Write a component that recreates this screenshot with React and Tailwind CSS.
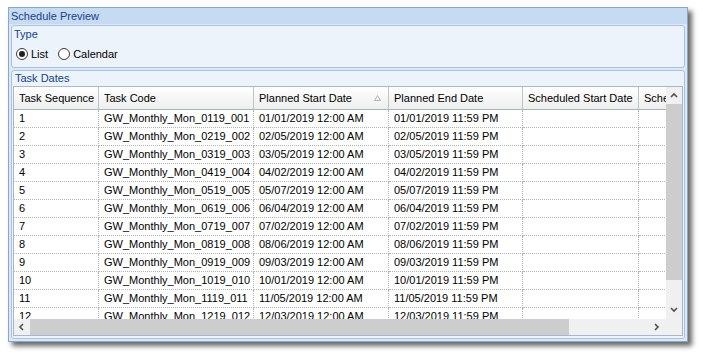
import React from 'react';

const cols = [
  { title: 'Task Sequence', w: 85 },
  { title: 'Task Code', w: 155 },
  { title: 'Planned Start Date', w: 135, sort: true },
  { title: 'Planned End Date', w: 134 },
  { title: 'Scheduled Start Date', w: 116 },
  { title: 'Scheduled End Date', w: 130 },
];

const starts = ['01/01', '02/05', '03/05', '04/02', '05/07', '06/04', '07/02', '08/06', '09/03', '10/01', '11/05', '12/03'];

const rows = starts.map((d, i) => {
  const n = i + 1;
  const mm = String(n).padStart(2, '0');
  return [
    String(n),
    `GW_Monthly_Mon_${mm}19_${String(n).padStart(3, '0')}`,
    `${d}/2019 12:00 AM`,
    `${d}/2019 11:59 PM`,
    '',
    '',
  ];
});

function Chevron({ dir }) {
  const pts = {
    up: '1,5 4,2 7,5',
    down: '1,2 4,5 7,2',
    left: '5,1 2,4 5,7',
    right: '2,1 5,4 2,7',
  }[dir];
  return (
    <svg width="8" height="8" viewBox="0 0 8 8">
      <polyline points={pts} fill="none" stroke="#505050" strokeWidth="1.6" />
    </svg>
  );
}

function Radio({ checked, label }) {
  return (
    <div className="flex items-center gap-[3px]">
      <div className="w-[12px] h-[12px] rounded-full border border-[#3c3c3c] bg-white flex items-center justify-center">
        {checked && <div className="w-[6px] h-[6px] rounded-full bg-[#1e1e1e]" />}
      </div>
      <span>{label}</span>
    </div>
  );
}

export default function App() {
  return (
    <div
      className="w-[703px] h-[357px] bg-white pl-[8px] pt-[7px] text-[11px] text-black"
      style={{ fontFamily: '"Liberation Sans", Arial, sans-serif' }}
    >
      <div className="w-[680px] h-[335px] border border-[#8aa6cb] bg-[#dce8f6] flex flex-col shadow-[4px_4px_5px_rgba(0,0,0,0.6)]">
        {/* Title */}
        <div className="h-[16px] bg-[#c6daf1] text-[#15428b] pl-[2px] flex items-center leading-none">
          Schedule Preview
        </div>

        <div className="flex flex-col px-[2px] pt-[1px] gap-[2px]">
          {/* Type group */}
          <div className="h-[43px] rounded-[3px] border border-[#a9c2e0] bg-[#edf3fb] flex flex-col">
            <div className="h-[15px] pl-[2px] pt-[1px] text-[#15428b] leading-[14px]">Type</div>
            <div className="flex items-center gap-[10px] pl-[4px] pt-[7px] leading-none">
              <Radio checked label="List" />
              <Radio label="Calendar" />
            </div>
          </div>

          {/* Task Dates group */}
          <div className="h-[269px] rounded-[3px] border border-[#a9c2e0] bg-[#edf3fb] flex flex-col px-[1px]">
            <div className="h-[15px] pl-[2px] text-[#15428b] leading-[14px]">Task Dates</div>
            <div className="h-[250px] border border-[#aab8c8] bg-white flex flex-col">
              <div className="h-[232px] flex">
                <div className="flex-1 overflow-hidden">
                  <div className="flex h-[23px] w-max">
                    {cols.map((c) => (
                      <div
                        key={c.title}
                        style={{ width: c.w }}
                        className="shrink-0 h-full flex items-center justify-between pl-[5px] pr-[7px] border-r border-b border-r-[#b7c8c6] border-b-[#a4b7b4] bg-gradient-to-b from-white to-[#eeeeee] whitespace-nowrap overflow-hidden"
                      >
                        <span>{c.title}</span>
                        {c.sort && (
                          <svg width="7" height="6" viewBox="0 0 7 6">
                            <polygon points="3.5,0.5 6.5,5.5 0.5,5.5" fill="#f2f2f2" stroke="#b4b4b4" strokeWidth="1" />
                          </svg>
                        )}
                      </div>
                    ))}
                  </div>
                  {rows.map((r, i) => (
                    <div key={i} className="flex h-[18px] w-max">
                      {r.map((v, j) => (
                        <div
                          key={j}
                          style={{ width: cols[j].w }}
                          className="shrink-0 h-full flex items-center pl-[5px] border-r border-b border-dotted border-[#b4b4b4] whitespace-nowrap overflow-hidden"
                        >
                          {v}
                        </div>
                      ))}
                    </div>
                  ))}
                </div>
                {/* vertical scrollbar */}
                <div className="w-[16px] bg-[#f0f0f0] flex flex-col items-center">
                  <div className="h-[17px] flex items-center justify-center">
                    <Chevron dir="up" />
                  </div>
                  <div className="w-[16px] h-[176px] bg-[#cdcdcd]" />
                  <div className="flex-1 flex items-end justify-center pb-[5px]">
                    <Chevron dir="down" />
                  </div>
                </div>
              </div>
              {/* horizontal scrollbar */}
              <div className="h-[16px] flex">
                <div className="flex-1 bg-[#f0f0f0] flex items-center">
                  <div className="w-[16px] flex items-center justify-center">
                    <Chevron dir="left" />
                  </div>
                  <div className="w-[539px] h-[16px] bg-[#cdcdcd]" />
                  <div className="flex-1 flex items-center justify-end pr-[5px]">
                    <Chevron dir="right" />
                  </div>
                </div>
                <div className="w-[16px] bg-[#f0f0f0]" />
              </div>
            </div>
          </div>
        </div>
      </div>
    </div>
  );
}
